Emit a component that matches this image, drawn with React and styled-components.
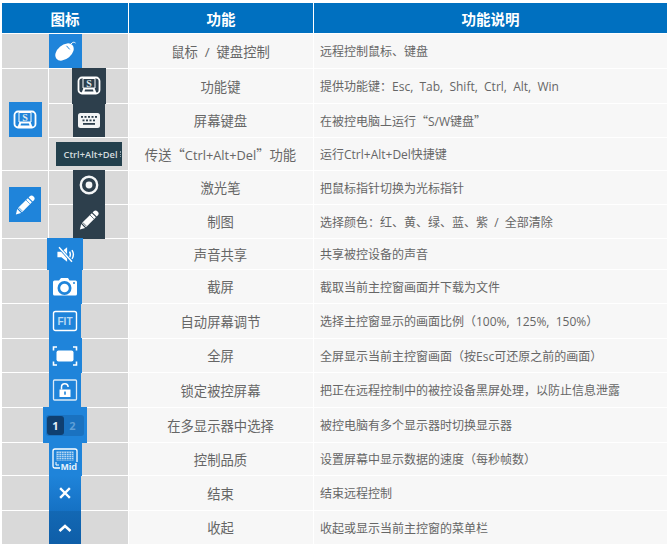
import React from "react";
import styled, { createGlobalStyle } from "styled-components";

const Global = createGlobalStyle`
  html, body { margin: 0; padding: 0; background: #fff; }
  body { font-family: "Open Sans", "Noto Sans CJK SC", sans-serif; }
`;

const Page = styled.div`
  padding: 2px 0 0 1px;
  width: 668px;
  box-sizing: border-box;
`;

const Table = styled.table`
  border-collapse: separate;
  border-spacing: 1px;
  table-layout: fixed;
  width: 667px;
`;

const Head = styled.th`
  height: 30px;
  padding: 0;
  background: #0070c0;
  color: #fff;
  font-size: 14.5px;
  font-weight: 700;
  text-align: center;
  vertical-align: middle;
`;

const Row = styled.tr`
  height: ${(p) => p.$h}px;
`;

const IconCell = styled.td`
  padding: 0;
  background: #d9d9d9;
  vertical-align: middle;
`;

const NameCell = styled.td`
  padding: 0 1px 0 0;
  background: #f7f7f7;
  color: #666;
  font-size: 13.33px;
  text-align: center;
  vertical-align: middle;
  white-space: nowrap;
`;

const DescCell = styled.td`
  padding: 0 0 0 6px;
  background: #f7f7f7;
  color: #666;
  font-size: 12px;
  vertical-align: middle;
  white-space: nowrap;
`;

const Quote = styled.span`
  font-family: "Noto Sans CJK SC", sans-serif;
`;

const Latin = styled.span`
  font-size: 12.8px;
`;

const tones = {
  blue: "#1f84da",
  dark: "#2d3f4c",
  fade: "linear-gradient(#1f84da, #1571c4)",
  deep: "linear-gradient(#1368b4, #0e5ea8)",
};

const Tile = styled.div`
  width: ${(p) => p.$w}px;
  height: ${(p) => p.$h}px;
  margin: ${(p) => p.$m || "0 auto"};
  padding-bottom: ${(p) => p.$lift || 0}px;
  box-sizing: border-box;
  background: ${(p) => tones[p.$tone]};
  display: flex;
  align-items: center;
  justify-content: center;
  overflow: hidden;
`;

const KeyLabel = styled.div`
  width: 66px;
  height: 24px;
  margin: 0 auto;
  background: #23404d;
  color: #d3dcdf;
  font-size: 9.3px;
  font-weight: 600;
  display: flex;
  align-items: center;
  padding: 0 1px 0 8px;
  box-sizing: border-box;
  overflow: hidden;
  white-space: nowrap;

  &::after {
    content: "";
    margin-left: auto;
    height: 6px;
    border-left: 1px dotted #8ba0a9;
  }
`;

const Screens = styled.div`
  display: flex;
  width: 38px;
  height: 21px;
  padding: 1px;
  box-sizing: border-box;
  background: #1a72c0;
  border-radius: 3px;
`;

const Screen = styled.span`
  width: 17px;
  display: flex;
  align-items: center;
  justify-content: center;
  border-radius: 3px;
  font-size: 11px;
  font-weight: 700;
  color: ${(p) => (p.$on ? "#e8f2fa" : "#5f9fd6")};
  background: ${(p) => (p.$on ? "#0f3f70" : "transparent")};
`;

const Svg = ({ children, size = 26 }) => (
  <svg width={size} height={size} viewBox="0 0 26 26" fill="none">{children}</svg>
);

const Mouse = () => (
  <Svg>
    <path d="M19 6c1.6-2.2 3.4-2 4.5-1" stroke="#fff" strokeWidth="1" />
    <ellipse cx="12.5" cy="14" rx="7" ry="10.5" transform="rotate(50 12.5 14)" fill="#fff" />
    <path d="M14.5 7.8l3.2 3.6" stroke="#1f84da" strokeWidth="1" />
  </Svg>
);

const SKeys = ({ bg }) => (
  <Svg>
    <rect x="2.5" y="4.5" width="21" height="16" rx="3.5" stroke="#fff" strokeWidth="1.8" />
    <path d="M7 5.5h12v9.5H7z" fill={bg} stroke="#fff" strokeWidth="1" />
    <path d="M5.5 20l2-5h11l2 5z" fill="#fff" />
    <path d="M8.5 18.5l.6-2h7.8l.6 2z" fill={bg} />
    <text x="13" y="13.5" textAnchor="middle" fontFamily="Liberation Serif" fontSize="10" fontWeight="700" fill="#dfe8ee">S</text>
  </Svg>
);

const Keyboard = () => (
  <Svg>
    <rect x="2" y="5" width="22" height="15" rx="2.5" fill="#f2f4f5" />
    {[5, 8.5, 12, 15.5, 19].map((x) => (
      <rect key={x} x={x} y="8" width="2" height="1.8" fill="#2d3f4c" />
    ))}
    {[6.5, 10, 13.5, 17].map((x) => (
      <rect key={x} x={x} y="11.5" width="2" height="1.8" fill="#2d3f4c" />
    ))}
    <rect x="7" y="15" width="12" height="1.8" fill="#2d3f4c" />
  </Svg>
);

const Target = () => (
  <Svg>
    <circle cx="13" cy="13" r="8.2" stroke="#f4f6f7" strokeWidth="2.4" />
    <circle cx="13" cy="13" r="3.4" fill="#f4f6f7" />
  </Svg>
);

const Pencil = ({ bg }) => (
  <Svg>
    <path d="M17.5 4.5a2.9 2.9 0 0 1 4.2 4l-1 1-4.1-4.1z" fill="#fff" />
    <path d="M15.8 6.2l4.1 4.1L10 20.2l-4.1-4.1z" fill="#fff" />
    <path d="M5.2 17l3.9 3.9-5.2 1.5z" fill="#fff" />
    <path d="M6.8 15.5l3.8 3.8M14 8l3.8 3.8" stroke={bg} strokeWidth=".7" />
  </Svg>
);

const Mute = () => (
  <Svg size={21}>
    <path d="M3 9.5h5l7-5.5v18l-7-5.5H3z" fill="#fff" />
    <path d="M18 9.5q2 3.5 0 7M21 7.5q3.5 5.5 0 11" stroke="#fff" strokeWidth="1.8" />
    <path d="M5 4l16 18" stroke="#1f84da" strokeWidth="3.6" />
    <path d="M5 4l16 18" stroke="#fff" strokeWidth="1.8" />
  </Svg>
);

const Camera = () => (
  <Svg>
    <path d="M2.5 6.5h4.5l2-2.5h7l1.5 2.5h6q1.5 0 1.5 1.5v12q0 1.5-1.5 1.5h-21q-1.5 0-1.5-1.5v-12q0-1.5 1.5-1.5z" fill="#fff" />
    <circle cx="12.5" cy="14" r="7" fill="#1f84da" />
    <circle cx="12.5" cy="14" r="4.3" fill="#fff" />
    <circle cx="22" cy="9" r="1" fill="#1f84da" />
  </Svg>
);

const Fit = () => (
  <Svg>
    <rect x="1.5" y="3.5" width="23" height="19" rx="2" stroke="#fff" strokeWidth="1.4" />
    <text x="13" y="17" textAnchor="middle" fontFamily="Liberation Sans" fontSize="10.5" fill="#bcdaf3" fontWeight="700" textLength="15" lengthAdjust="spacingAndGlyphs">FIT</text>
  </Svg>
);

const Full = () => (
  <Svg>
    <path d="M5 4H1.5v3.5M21 4h3.5v3.5M5 22H1.5v-3.5M21 22h3.5v-3.5" stroke="#fff" strokeWidth="1.6" />
    <rect x="4.5" y="7.5" width="17" height="11" rx="2" fill="#fff" />
  </Svg>
);

const Lock = () => (
  <Svg>
    <rect x="1.5" y="3" width="23" height="20" rx="1" stroke="#dceaf6" strokeWidth="1.3" />
    <path d="M9.5 12.5V10a3.3 3.3 0 0 1 6.6 0" stroke="#fff" strokeWidth="1.5" />
    <rect x="7.5" y="12.5" width="11" height="7.5" fill="#fff" />
    <rect x="12.2" y="14.5" width="1.6" height="3.2" fill="#1f84da" />
  </Svg>
);

const Mid = () => (
  <svg width="27" height="26" viewBox="0 0 27 26" fill="none">
    <path d="M8 22H3q-2 0-2-2V5q0-2 2-2h20q2 0 2 2v11" stroke="#fff" strokeWidth="1.3" />
    <rect x="4.5" y="5.5" width="17" height="9" fill="#b5d6f2" />
    <path d="M4.5 7.5h17M4.5 9.5h17M4.5 11.5h17M4.5 13.5h17M7 5.5v9M9.5 5.5v9M12 5.5v9M14.5 5.5v9M17 5.5v9M19.5 5.5v9" stroke="#1f84da" strokeWidth=".6" />
    <path d="M4 16v3h3" stroke="#fff" strokeWidth="1" />
    <text x="17" y="24" textAnchor="middle" fontFamily="Liberation Sans" fontSize="9.5" fontWeight="700" fill="#e8f3fb">Mid</text>
  </svg>
);

const Close = () => (
  <Svg>
    <path d="M9 9l8 8M17 9l-8 8" stroke="#fff" strokeWidth="2.4" strokeLinecap="square" />
  </Svg>
);

const Up = () => (
  <Svg>
    <path d="M7.5 16L13 11l5.5 5" stroke="#fff" strokeWidth="2.6" />
  </Svg>
);

const Displays = () => (
  <Screens>
    <Screen $on>1</Screen>
    <Screen>2</Screen>
  </Screens>
);

const Blue = "#1f84da";
const Dark = "#2d3f4c";

export default function App() {
  return (
    <Page>
      <Global />
      <Table>
        <colgroup>
          <col width="46" />
          <col width="79" />
          <col width="184" />
          <col width="353" />
        </colgroup>
        <thead>
          <tr>
            <Head colSpan={2}>图标</Head>
            <Head>功能</Head>
            <Head>功能说明</Head>
          </tr>
        </thead>
        <tbody>
          <Row $h={34}>
            <IconCell colSpan={2}><Tile $tone="blue" $w={33} $h={34}><Mouse /></Tile></IconCell>
            <NameCell>鼠标&nbsp; /&nbsp; 键盘控制</NameCell>
            <DescCell>远程控制鼠标、键盘</DescCell>
          </Row>
          <Row $h={34}>
            <IconCell rowSpan={3}><Tile $tone="blue" $w={33} $h={35}><SKeys bg={Blue} /></Tile></IconCell>
            <IconCell><Tile $tone="dark" $w={34} $h={36} $m="-1px auto"><SKeys bg={Dark} /></Tile></IconCell>
            <NameCell>功能键</NameCell>
            <DescCell>提供功能键&#xFF1A;Esc,&nbsp; Tab,&nbsp; Shift,&nbsp; Ctrl,&nbsp; Alt,&nbsp; Win</DescCell>
          </Row>
          <Row $h={33}>
            <IconCell><Tile $tone="dark" $w={32} $h={33}><Keyboard /></Tile></IconCell>
            <NameCell>屏幕键盘</NameCell>
            <DescCell>在被控电脑上运行<Quote>“</Quote>S/W键盘<Quote>”</Quote></DescCell>
          </Row>
          <Row $h={32}>
            <IconCell><KeyLabel>Ctrl+Alt+Del</KeyLabel></IconCell>
            <NameCell>传送<Quote>“</Quote><Latin>Ctrl+Alt+Del</Latin><Quote>”</Quote>功能</NameCell>
            <DescCell>运行Ctrl+Alt+Del快捷键</DescCell>
          </Row>
          <Row $h={33}>
            <IconCell rowSpan={2}><Tile $tone="blue" $w={32} $h={35}><Pencil bg={Blue} /></Tile></IconCell>
            <IconCell><Tile $tone="dark" $w={32} $h={35} $m="-1px auto" $lift={5}><Target /></Tile></IconCell>
            <NameCell>激光笔</NameCell>
            <DescCell>把鼠标指针切换为光标指针</DescCell>
          </Row>
          <Row $h={33}>
            <IconCell><Tile $tone="dark" $w={32} $h={35} $m="-1px auto" $lift={3}><Pencil bg={Dark} /></Tile></IconCell>
            <NameCell>制图</NameCell>
            <DescCell>选择颜色&#xFF1A;红、黄、绿、蓝、紫&nbsp; /&nbsp; 全部清除</DescCell>
          </Row>
          <Row $h={30}>
            <IconCell colSpan={2}><Tile $tone="blue" $w={36} $h={32} $m="-1px auto"><Mute /></Tile></IconCell>
            <NameCell>声音共享</NameCell>
            <DescCell>共享被控设备的声音</DescCell>
          </Row>
          <Row $h={33}>
            <IconCell colSpan={2}><Tile $tone="blue" $w={33} $h={35} $m="-1px auto"><Camera /></Tile></IconCell>
            <NameCell>截屏</NameCell>
            <DescCell>截取当前主控窗画面并下载为文件</DescCell>
          </Row>
          <Row $h={34}>
            <IconCell colSpan={2}><Tile $tone="blue" $w={32} $h={36} $m="-1px auto"><Fit /></Tile></IconCell>
            <NameCell>自动屏幕调节</NameCell>
            <DescCell>选择主控窗显示的画面比例&#xFF08;100%,&nbsp; 125%,&nbsp; 150%&#xFF09;</DescCell>
          </Row>
          <Row $h={33}>
            <IconCell colSpan={2}><Tile $tone="blue" $w={33} $h={35} $m="-1px auto"><Full /></Tile></IconCell>
            <NameCell>全屏</NameCell>
            <DescCell>全屏显示当前主控窗画面&#xFF08;按Esc可还原之前的画面&#xFF09;</DescCell>
          </Row>
          <Row $h={34}>
            <IconCell colSpan={2}><Tile $tone="blue" $w={32} $h={36} $m="-1px auto"><Lock /></Tile></IconCell>
            <NameCell>锁定被控屏幕</NameCell>
            <DescCell>把正在远程控制中的被控设备黑屏处理&#xFF0C;以防止信息泄露</DescCell>
          </Row>
          <Row $h={34}>
            <IconCell colSpan={2}><Tile $tone="blue" $w={44} $h={36} $m="-1px auto"><Displays /></Tile></IconCell>
            <NameCell>在多显示器中选择</NameCell>
            <DescCell>被控电脑有多个显示器时切换显示器</DescCell>
          </Row>
          <Row $h={32}>
            <IconCell colSpan={2}><Tile $tone="blue" $w={33} $h={34} $m="-1px auto"><Mid /></Tile></IconCell>
            <NameCell>控制品质</NameCell>
            <DescCell>设置屏幕中显示数据的速度&#xFF08;每秒帧数&#xFF09;</DescCell>
          </Row>
          <Row $h={34}>
            <IconCell colSpan={2}><Tile $tone="fade" $w={32} $h={36} $m="-1px auto"><Close /></Tile></IconCell>
            <NameCell>结束</NameCell>
            <DescCell>结束远程控制</DescCell>
          </Row>
          <Row $h={32}>
            <IconCell colSpan={2}><Tile $tone="deep" $w={32} $h={33} $m="0 auto"><Up /></Tile></IconCell>
            <NameCell>收起</NameCell>
            <DescCell>收起或显示当前主控窗的菜单栏</DescCell>
          </Row>
        </tbody>
      </Table>
    </Page>
  );
}
